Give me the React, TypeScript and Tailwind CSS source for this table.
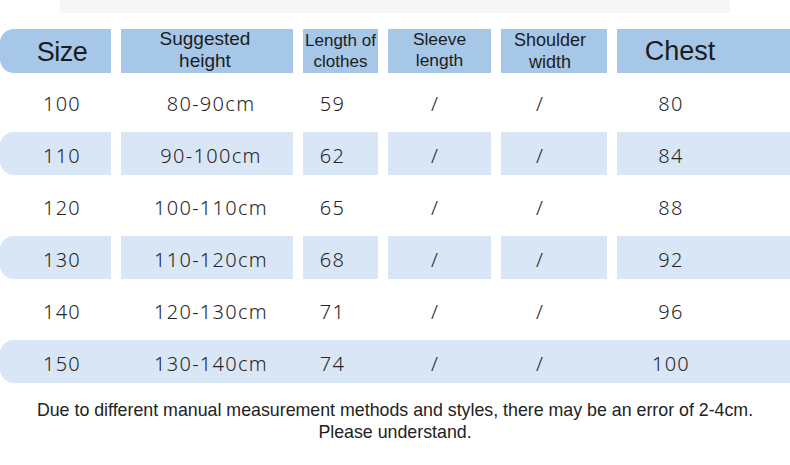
import React from "react";

const cols = "grid grid-cols-[111px_172px_75px_103px_106px_173px] gap-x-[10px]";

const rows = [
  ["100", "80-90cm", "59", "/", "/", "80"],
  ["110", "90-100cm", "62", "/", "/", "84"],
  ["120", "100-110cm", "65", "/", "/", "88"],
  ["130", "110-120cm", "68", "/", "/", "92"],
  ["140", "120-130cm", "71", "/", "/", "96"],
  ["150", "130-140cm", "74", "/", "/", "100"],
];

const dataPad = ["pl-[13px]", "pl-[8px]", "pr-[16px]", "pr-[9px]", "pr-[28px]", "pr-[65px]"];

function DataRow({ r, i }: { r: string[]; i: number }) {
  const shaded = i === 1 || i === 3;
  const full = i === 5;
  return (
    <div className={`${cols} h-[43px] ${full ? "bg-[#d9e6f5] rounded-l-[14px]" : ""}`}>
      {r.map((v, j) => (
        <div
          key={j}
          className={`flex items-center justify-center pt-[5px] ${dataPad[j]} ${shaded ? "bg-[#d9e6f5]" : ""} ${shaded && j === 0 ? "rounded-l-[14px]" : ""}`}
        >
          <span className="text-[20px] tracking-[1.3px] text-[#262626] leading-none font-light" style={{ fontFamily: '"Noto Sans", sans-serif' }}>
            {v}
          </span>
        </div>
      ))}
    </div>
  );
}

export default function App() {
  return (
    <div className="w-[790px] h-[465px] bg-white overflow-hidden relative" style={{ fontFamily: '"Liberation Sans", Arial, sans-serif' }}>
      <div className="mx-[60px] w-[670px] h-[13px] bg-[#f6f6f6]" />
      <div className="mt-[16px] flex flex-col">
        <div className={`${cols} h-[44px] text-[#1c1c1c]`}>
          <div className="bg-[#a7c7e8] rounded-l-[14px] flex items-center justify-center pl-[13px] pt-[3px]">
            <span className="text-[27px] leading-none tracking-[-0.5px]">Size</span>
          </div>
          <div className="bg-[#a7c7e8] flex flex-col items-center justify-center pr-[4px] text-[19px] leading-[22px]">
            <span className="-mt-[3px]">Suggested</span>
            <span>height</span>
          </div>
          <div className="bg-[#a7c7e8] flex flex-col items-center justify-center text-[17px] leading-[21px]">
            <span>Length of</span>
            <span>clothes</span>
          </div>
          <div className="bg-[#a7c7e8] flex flex-col items-center justify-center text-[17.4px] leading-[21px]">
            <span className="-mt-[2px]">Sleeve</span>
            <span>length</span>
          </div>
          <div className="bg-[#a7c7e8] flex flex-col items-center justify-center pr-[8px] text-[18px] leading-[22px]">
            <span>Shoulder</span>
            <span>width</span>
          </div>
          <div className="bg-[#a7c7e8] flex items-center justify-center pr-[47px] pt-[1px]">
            <span className="text-[27px] leading-none">Chest</span>
          </div>
        </div>
        <div className="mt-[7px] flex flex-col gap-y-[9px]">
          {rows.map((r, i) => (
            <DataRow key={i} r={r} i={i} />
          ))}
        </div>
      </div>
      <div className="mt-[16px] text-center text-[17.8px] leading-[22px] text-[#222]">
        <div>Due to different manual measurement methods and styles, there may be an error of 2-4cm.</div>
        <div>Please understand.</div>
      </div>
    </div>
  );
}
